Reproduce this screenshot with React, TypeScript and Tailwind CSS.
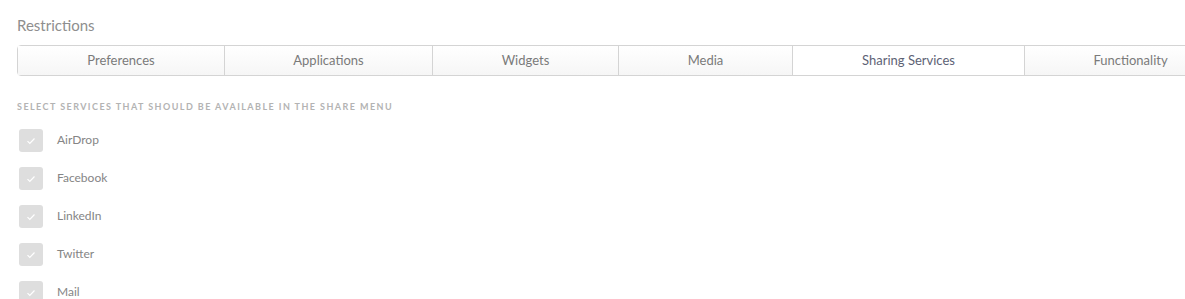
const tabs = [
  { label: "Preferences", width: "w-[206px]" },
  { label: "Applications", width: "w-[208px]" },
  { label: "Widgets", width: "w-[186px]" },
  { label: "Media", width: "w-[174px]" },
  { label: "Sharing Services", width: "w-[232px]", active: true },
  { label: "Functionality", width: "w-[212px]" },
];

const services = ["AirDrop", "Facebook", "LinkedIn", "Twitter", "Mail"];

function Tab({ label, width, active }: { label: string; width: string; active?: boolean }) {
  return (
    <div
      className={`${width} shrink-0 flex h-full items-center justify-center border-l border-[#d4d4d4] first:border-l-0 text-[13px] ${
        active
          ? "bg-white text-[#5d6275]"
          : "bg-gradient-to-b from-white to-[#f6f6f6] text-[#7a7a7a]"
      }`}
    >
      {label}
    </div>
  );
}

export default function App() {
  return (
    <div className="h-[299px] w-[1185px] overflow-hidden bg-white pl-[17px] font-['Lato',sans-serif]">
      <h2 className="pt-[16px] text-[15px] leading-[18px] text-[#8e8e8e]">Restrictions</h2>
      <div className="mt-[11px] flex h-[31px] w-max rounded-[4px] border border-[#d4d4d4]">
        {tabs.map((t) => (
          <Tab key={t.label} {...t} />
        ))}
      </div>
      <p className="mt-[26px] text-[9px] font-bold tracking-[0.16em] text-[#b3b3b3] leading-[10px]">
        SELECT SERVICES THAT SHOULD BE AVAILABLE IN THE SHARE MENU
      </p>
      <ul className="mt-[17px] flex flex-col gap-[15px]">
        {services.map((s) => (
          <li key={s} className="flex h-[23px] items-center">
            <span className="ml-[2px] flex h-[23px] w-[24px] items-center justify-center rounded-[3px] bg-[#dedede]">
              <svg width="10" height="8" viewBox="0 0 10 8" fill="none">
                <path d="M1.5 4.2 L3.8 6.5 L8.5 1.5" stroke="#ffffff" strokeWidth="1.2" />
              </svg>
            </span>
            <span className="-mt-[1px] ml-[14px] text-[12px] text-[#858585]">{s}</span>
          </li>
        ))}
      </ul>
    </div>
  );
}
